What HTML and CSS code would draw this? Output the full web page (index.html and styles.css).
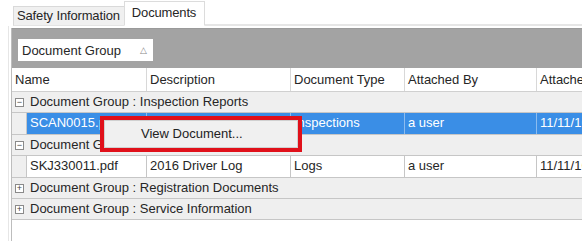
FILE: index.html
```html
<!DOCTYPE html>
<html>
<head>
<meta charset="utf-8">
<link rel="stylesheet" href="styles.css">
</head>
<body>
<div class="page">
  <div class="tabs">
    <div class="tab">Safety Information</div>
    <div class="tab active">Documents</div>
    <div class="tab-fill"></div>
  </div>
  <div class="panel">
    <div class="grid">
      <div class="groupbar">
        <div class="groupbtn"><span>Document Group</span><span class="tri">&#9651;</span></div>
      </div>
      <div class="row header">
        <div class="c name-h">Name</div>
        <div class="c desc">Description</div>
        <div class="c type">Document Type</div>
        <div class="c by">Attached By</div>
        <div class="c at">Attached</div>
      </div>
      <div class="group"><span class="exp">&minus;</span>Document Group : Inspection Reports</div>
      <div class="row data selected">
        <div class="indent"></div>
        <div class="c name">SCAN0015.pdf</div>
        <div class="c desc">Inspection Report</div>
        <div class="c type">Inspections</div>
        <div class="c by">a user</div>
        <div class="c at">11/11/16</div>
      </div>
      <div class="group"><span class="exp">&minus;</span>Document Group : Logs</div>
      <div class="row data">
        <div class="indent"></div>
        <div class="c name">SKJ330011.pdf</div>
        <div class="c desc">2016 Driver Log</div>
        <div class="c type">Logs</div>
        <div class="c by">a user</div>
        <div class="c at">11/11/16</div>
      </div>
      <div class="group"><span class="exp">+</span>Document Group : Registration Documents</div>
      <div class="group"><span class="exp">+</span>Document Group : Service Information</div>
      <div class="empty"></div>
    </div>
    <div class="menu">
      <div class="menu-item">View Document...</div>
    </div>
  </div>
</div>
</body>
</html>
```
FILE: styles.css
```css
html, body {
  margin: 0;
  padding: 0;
  background: #fff;
}
body {
  font-family: "Liberation Sans", Arial, sans-serif;
  font-size: 13px;
  color: #262626;
  width: 582px;
  height: 241px;
  overflow: hidden;
}
.page {
  position: relative;
}
.tabs {
  display: flex;
  align-items: flex-end;
  height: 26px;
  padding-left: 13px;
}
.tab {
  height: 18px;
  line-height: 18px;
  padding: 0 4px 0 3px;
  background: #f0f0f0;
  border: 1px solid #d9d9d9;
  border-bottom: 1px solid #e4e4e4;
  white-space: nowrap;
  letter-spacing: -0.15px;
}
.tab.active {
  height: 23px;
  line-height: 22px;
  padding: 0 8px 0 7px;
  background: #fff;
  border-color: #dcdcdc;
  border-bottom: 1px solid #fff;
  margin-left: -1px;
}
.tab-fill {
  flex: 1;
  border-bottom: 2px solid #e6e6e6;
}
.panel {
  position: relative;
  margin-left: 8px;
  border-left: 1px solid #e6e6e6;
  padding: 2px 0 0 2px;
}
.grid {
  border-left: 1px solid #bdbdbd;
  width: 700px;
}
.groupbar {
  background: #a3a3a3;
  height: 39px;
  display: flex;
  align-items: center;
  padding-left: 6px;
  border-top: 1px solid #9a9a9a;
}
.groupbtn {
  display: flex;
  align-items: center;
  justify-content: space-between;
  width: 127px;
  height: 22px;
  padding: 0 4px 0 4px;
  background: #fff;
  margin-top: 3px;
}
.tri {
  font-size: 9px;
  color: #888;
  margin-right: 2px;
}
.row {
  display: grid;
  grid-template-columns: 15px 120px 144px 114px 132px 175px;
}
.row.header {
  grid-template-columns: 135px 144px 114px 132px 175px;
  height: 23px;
  background: #fff;
  border-bottom: 1px solid #d0d0d0;
}
.header .c {
  line-height: 23px;
  padding-left: 3px;
  border-right: 1px solid #d8d8d8;
}
.row.data {
  height: 21px;
  border-bottom: 1px solid #c6c6c6;
}
.indent {
  background: #efefef;
  border-right: 1px solid #c6c6c6;
}
.data .c {
  line-height: 20px;
  padding-left: 3px;
  background: #fff;
  border-right: 1px solid #c6c6c6;
  white-space: nowrap;
  overflow: hidden;
}
.data.selected .c {
  background: #3a8ee6;
  color: #fff;
  border-right-color: #8bbcef;
}
.group {
  height: 20px;
  line-height: 20px;
  background: #efefef;
  border-bottom: 1px solid #c6c6c6;
  display: flex;
  align-items: center;
  white-space: nowrap;
}
.exp {
  display: inline-flex;
  align-items: center;
  justify-content: center;
  box-sizing: border-box;
  width: 9px;
  height: 9px;
  border: 1px solid #8a8a8a;
  background: #fff;
  color: #444;
  font-size: 9px;
  line-height: 7px;
  margin: 0 6px 0 3px;
}
.empty {
  height: 30px;
  background: #fff;
}
.menu {
  position: absolute;
  left: 91px;
  top: 90px;
  width: 194px;
  height: 28px;
  border: 4px solid #e0101a;
  background: #f0f0f0;
  box-shadow: inset 0 0 0 1px #d0d0d0;
}
.menu-item {
  line-height: 28px;
  padding-left: 37px;
  color: #222;
}
```
